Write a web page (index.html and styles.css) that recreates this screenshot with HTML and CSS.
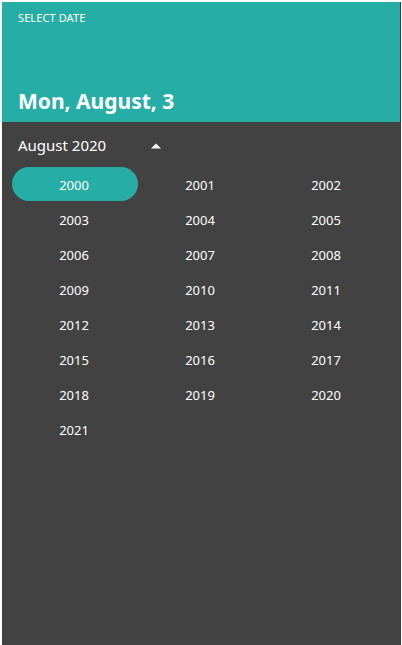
FILE: index.html
```html
<!DOCTYPE html>
<html>
<head>
<meta charset="utf-8">
<link rel="stylesheet" href="styles.css">
</head>
<body>
<div class="dialog">
  <div class="header">
    <div class="label">SELECT DATE</div>
    <div class="date">Mon, August, 3</div>
  </div>
  <div class="content">
    <div class="month-row">
      <span class="month">August 2020</span>
      <svg class="caret" width="10" height="6" viewBox="0 0 10 6"><path d="M0 5.5 L5 0.5 L10 5.5 Z" fill="#fff"/></svg>
    </div>
    <div class="years">
      <div class="year selected">2000</div>
      <div class="year">2001</div>
      <div class="year">2002</div>
      <div class="year">2003</div>
      <div class="year">2004</div>
      <div class="year">2005</div>
      <div class="year">2006</div>
      <div class="year">2007</div>
      <div class="year">2008</div>
      <div class="year">2009</div>
      <div class="year">2010</div>
      <div class="year">2011</div>
      <div class="year">2012</div>
      <div class="year">2013</div>
      <div class="year">2014</div>
      <div class="year">2015</div>
      <div class="year">2016</div>
      <div class="year">2017</div>
      <div class="year">2018</div>
      <div class="year">2019</div>
      <div class="year">2020</div>
      <div class="year">2021</div>
    </div>
  </div>
</div>
</body>
</html>
```
FILE: styles.css
```css
html, body {
  margin: 0;
  padding: 0;
  background: #ffffff;
  height: 100%;
  overflow: hidden;
}
body {
  padding: 2px 1px 0 2px;
  box-sizing: border-box;
  font-family: "Noto Sans", "Open Sans", sans-serif;
  color: #ffffff;
}
.dialog {
  width: 398px;
  height: 643px;
  background: #424242;
  box-shadow: 1px 0 0 #3a3a3a;
}
.header {
  background: #26ada6;
  height: 120px;
  box-sizing: border-box;
  padding: 9px 16px 8px 16px;
  display: flex;
  flex-direction: column;
  justify-content: space-between;
}
.label {
  font-size: 11px;
  line-height: 14px;
  letter-spacing: 0.1px;
}
.date {
  font-size: 21px;
  font-weight: 700;
  line-height: 26px;
}
.content {
  padding: 11px 10px 0 10px;
}
.month-row {
  display: flex;
  align-items: center;
  height: 24px;
  padding-left: 6px;
}
.month {
  font-size: 15px;
  width: 133px;
}
.caret {
  display: block;
  margin-top: 1px;
}
.years {
  display: grid;
  grid-template-columns: repeat(3, 126px);
  grid-auto-rows: 35px;
  margin-top: 10px;
}
.year {
  height: 34px;
  box-sizing: border-box;
  padding-top: 2px;
  padding-right: 2px;
  display: flex;
  align-items: center;
  justify-content: center;
  font-size: 13px;
  border-radius: 17px;
}
.year.selected {
  background: #26ada6;
}
```
